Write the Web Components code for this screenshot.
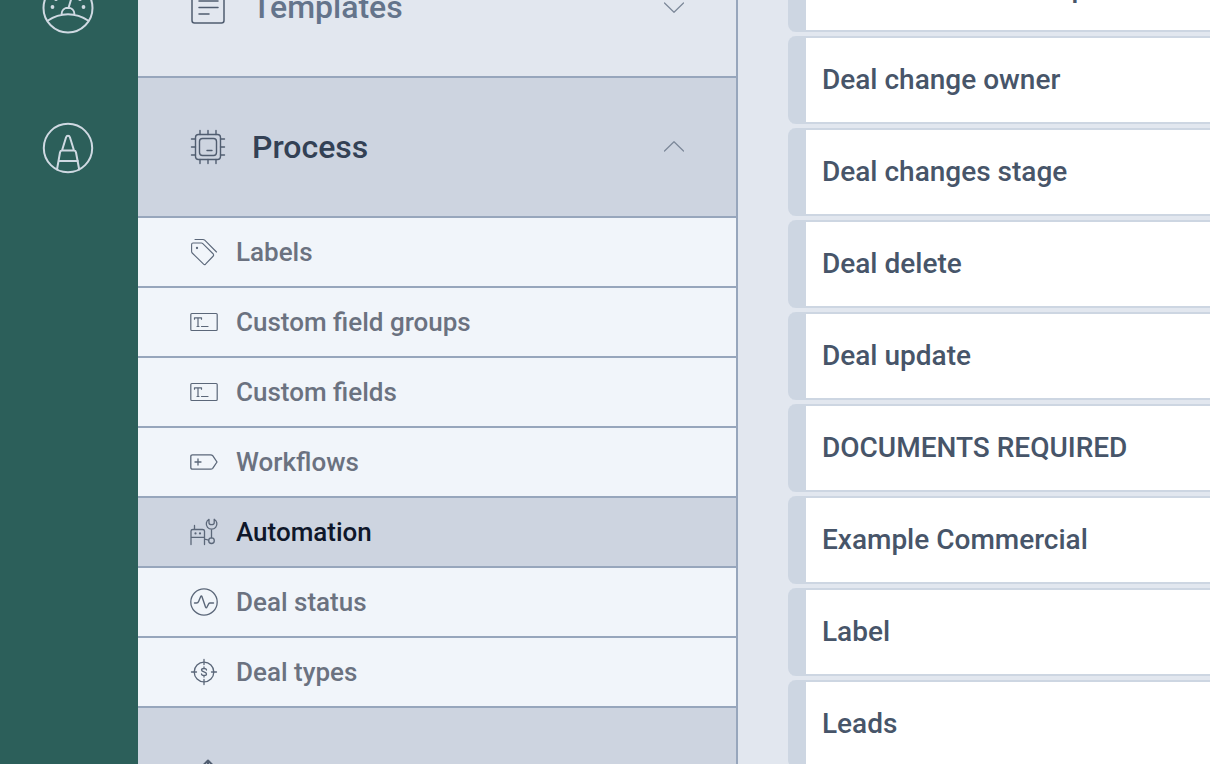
<!DOCTYPE html>
<html lang="en">
<head>
<meta charset="utf-8">
<title>Automation settings</title>
<style>
  body { margin: 0; font-family: Roboto, "Liberation Sans", sans-serif; overflow: hidden; }
</style>
</head>
<body>
<settings-app></settings-app>
<script>
const icons = {
  gauge: [52, 52, 2, `<circle cx="26" cy="26" r="24.5"/><path d="M6 38.5C18 30 34 30 46 38.5M19.500 32.500C19.500 23.500 32.500 23.500 32.500 32.500M26.500 26L29.500 16"/><g fill="currentColor" stroke="none"><circle cx="10.500" cy="25" r="1.900"/><circle cx="41.500" cy="25" r="1.900"/><circle cx="14" cy="17" r="1.900"/><circle cx="38" cy="17" r="1.900"/></g>`],
  cone: [52, 52, 2, `<circle cx="26" cy="26" r="24.200"/><path d="M15 47.500L18 30.500Q18.300 28.700 20 28.500L24 15.500C24.700 13.200 27.300 13.200 28 15.500L32 28.500Q33.700 28.700 34 30.500L37.200 47.500M20 28.500H32M16.500 39H36"/>`],
  doc: [36, 36, 1.5, `<rect x="2" y="1" width="32" height="33" rx="2.500"/><path d="M9 5H28M9 11.500H28M9 18H19" transform="translate(0 7)"/>`],
  chip: [36, 36, 1.4, `<rect x="5.500" y="5.500" width="25" height="25" rx="3"/><rect x="9.500" y="9.500" width="17" height="17" rx="3"/><path d="M17 21.500H22M10 1.500V5.500M18 1.500V5.500M26 1.500V5.500M10 30.500V34.500M18 30.500V34.500M26 30.500V34.500M1.500 10H5.500M1.500 18H5.500M1.500 26H5.500M30.500 10H34.500M30.500 18H34.500M30.500 26H34.500"/>`],
  tag: [28, 28, 1.1, `<path d="M3 5H11.500Q12.200 5 12.800 5.600L23.300 16Q24 17 23.300 18L15.500 26.200Q14.500 27 13.600 26.200L2.200 15Q1.600 14.400 1.600 13.500V6.500Q1.600 5 3 5ZM5 1.500H13Q14 1.500 14.700 2.200L26.500 14"/><circle cx="7" cy="10" r=".6"/>`],
  field: [28, 28, 1.2, `<rect x=".8" y="5.500" width="26.400" height="17" rx="1"/><path d="M4.500 11.200V9.800H11.500V11.200M8 9.800V18.500M7 18.500H9M11.500 18.500H18"/>`],
  flow: [28, 28, 1.3, `<path d="M2.500 6.800H20.500Q22 6.800 22.700 7.700L27 14L22.700 20.300Q22 21.200 20.500 21.200H2.500Q.8 21.200 .8 19.500V8.500Q.8 6.800 2.500 6.800ZM5 14H11M8 11V17"/>`],
  robot: [28, 28, 1.3, `<path d="M1 26.500V13Q1 11.500 3 11.500H12.500Q14.500 11.500 14.500 13V26.500M1 19.300H14.500M4.500 11V7.500M14.500 21L18.500 22.200M21.500 11.800V19.800"/><circle cx="21.500" cy="22.700" r="2.800"/><path d="M19 1.300A5.300 5.300 0 1 0 24.200 1.300V5Q24.200 6.700 21.600 6.700T19 5Z"/><g fill="currentColor" stroke="none"><circle cx="5.500" cy="15.400" r="1.100"/><circle cx="10" cy="15.400" r="1.100"/></g>`],
  pulse: [28, 28, 1.3, `<circle cx="14" cy="14" r="13.200"/><path d="M4.500 15H6.500Q8 15 8.700 13.200L10.700 8.500Q11.300 7.400 12 8.700L15.500 19Q16.300 20.700 17 19L18.800 15.700Q19.200 15 20 15H23.500" stroke-width="1.400"/>`],
  target: [28, 28, 1.3, `<circle cx="14" cy="14" r="9.800"/><path d="M14 1.500V6.500M14 21.500V26.500M1.500 14H6.500M21.500 14H26.500M16.500 12C16.500 10 11.500 10 11.500 12.100C11.500 14.300 16.500 13.600 16.500 15.900C16.500 18 11.500 18 11.500 16M14 9V10.300M14 17.700V19"/>`],
  upload: [36, 36, 2, `<path d="M18 2V20M12.500 7L18 1.500L23.500 7M4 20V31Q4 34 7 34H29Q32 34 32 31V20"/>`],
  down: [20, 14, 1.2, `<path d="M.5 3L10 12.300L19.500 3"/>`],
  up: [20, 14, 1.2, `<path d="M.5 11L10 1.700L19.500 11"/>`]
};

class AppIcon extends HTMLElement {
  connectedCallback() {
    const [w, h, stroke, shapes] = icons[this.getAttribute("name")];
    this.attachShadow({ mode: "open" }).innerHTML = `
      <style>:host { display: block; flex: none; } svg { display: block; }</style>
      <svg width="${w}" height="${h}" viewBox="0 0 ${w} ${h}" fill="none" stroke="currentColor"
        stroke-width="${stroke}" stroke-linecap="round" stroke-linejoin="round" aria-hidden="true">${shapes}</svg>`;
  }
}
customElements.define("app-icon", AppIcon);

class RailLink extends HTMLElement {
  connectedCallback() {
    this.attachShadow({ mode: "open" }).innerHTML = `
      <style>
        :host { display: block; color: #cfd9e2; }
        a { display: flex; align-items: center; justify-content: center; height: 140px; color: inherit; }
      </style>
      <a href="#" aria-label="${this.getAttribute("label")}"><app-icon name="${this.getAttribute("icon")}"></app-icon></a>`;
  }
}
customElements.define("rail-link", RailLink);

class NavSection extends HTMLElement {
  connectedCallback() {
    this.attachShadow({ mode: "open" }).innerHTML = `
      <style>
        :host { display: block; --ink: #64748b; }
        :host([open]) { --ink: #334155; --fill: #cdd4e0; }
        :host([shaded]) { --fill: #cdd4e0; }
        button {
          display: flex; align-items: center; gap: 26px; box-sizing: border-box;
          width: 100%; height: 140px; padding: 0 52px; border: 0; border-bottom: 2px solid #97a6bc;
          background: var(--fill, #e2e7ef); color: #505d70; font: 500 32px/40px Roboto, sans-serif; text-align: left;
        }
        .label { flex: 1; color: var(--ink); }
        .arrow { color: #7b8798; }
      </style>
      <button type="button" aria-expanded="${this.hasAttribute("open")}">
        <app-icon name="${this.getAttribute("icon")}"></app-icon>
        <span class="label">${this.getAttribute("label")}</span>
        <app-icon class="arrow" name="${this.hasAttribute("open") ? "up" : "down"}"></app-icon>
      </button>
      <slot></slot>`;
  }
}
customElements.define("nav-section", NavSection);

class NavItem extends HTMLElement {
  connectedCallback() {
    this.attachShadow({ mode: "open" }).innerHTML = `
      <style>
        :host { display: block; --ink: #6b7280; --fill: #f1f5fa; }
        :host([current]) { --ink: #0f172a; --fill: #cdd4e0; }
        a {
          display: flex; align-items: center; gap: 18px; box-sizing: border-box; height: 70px;
          padding: 0 52px; border-bottom: 2px solid #97a6bc; background: var(--fill);
          color: #5b6779; font: 500 26px/32px Roboto, sans-serif; text-decoration: none;
        }
        span { color: var(--ink); }
      </style>
      <a href="#"><app-icon name="${this.getAttribute("icon")}"></app-icon><span><slot></slot></span></a>`;
  }
}
customElements.define("nav-item", NavItem);

class AutomationCard extends HTMLElement {
  connectedCallback() {
    this.attachShadow({ mode: "open" }).innerHTML = `
      <style>
        :host { display: block; }
        a {
          display: flex; align-items: center; box-sizing: border-box; height: 88px; padding: 0 16px;
          border: 2px solid #cdd6e2; border-left-width: 18px; border-right: 0; border-radius: 8px 0 0 8px;
          background: #fff; color: #475569; font: 500 28px/36px Roboto, sans-serif;
          text-decoration: none; white-space: nowrap;
        }
      </style>
      <a href="#"><slot></slot></a>`;
  }
}
customElements.define("automation-card", AutomationCard);

class SettingsApp extends HTMLElement {
  connectedCallback() {
    this.attachShadow({ mode: "open" }).innerHTML = `
      <style>
        :host { display: grid; grid-template-columns: 138px 600px minmax(0, 1fr); height: 100vh; overflow: hidden; background: #e2e7ef; }
        /* The three columns are shown part-way down their content. */
        .rail { background: #2c5f5a; overflow: hidden; }
        .rail div { margin-top: -62px; padding-right: 2px; }
        nav { border-right: 2px solid #97a6bc; overflow: hidden; }
        nav div { margin-top: -62px; }
        main { padding-left: 50px; overflow: hidden; }
        main div { display: grid; gap: 4px; margin-top: -56px; }
      </style>
      <aside class="rail"><div>
        <rail-link icon="gauge" label="Dashboard"></rail-link>
        <rail-link icon="cone" label="Settings"></rail-link>
      </div></aside>
      <nav><div>
        <nav-section icon="doc" label="Templates"></nav-section>
        <nav-section icon="chip" label="Process" open>
          <nav-item icon="tag">Labels</nav-item>
          <nav-item icon="field">Custom field groups</nav-item>
          <nav-item icon="field">Custom fields</nav-item>
          <nav-item icon="flow">Workflows</nav-item>
          <nav-item icon="robot" current>Automation</nav-item>
          <nav-item icon="pulse">Deal status</nav-item>
          <nav-item icon="target">Deal types</nav-item>
        </nav-section>
        <nav-section icon="upload" label="" shaded></nav-section>
      </div></nav>
      <main><div>
        <automation-card>Deal added in sales pool</automation-card>
        <automation-card>Deal change owner</automation-card>
        <automation-card>Deal changes stage</automation-card>
        <automation-card>Deal delete</automation-card>
        <automation-card>Deal update</automation-card>
        <automation-card>DOCUMENTS REQUIRED</automation-card>
        <automation-card>Example Commercial</automation-card>
        <automation-card>Label</automation-card>
        <automation-card>Leads</automation-card>
      </div></main>`;
  }
}
customElements.define("settings-app", SettingsApp);
</script>
</body>
</html>
